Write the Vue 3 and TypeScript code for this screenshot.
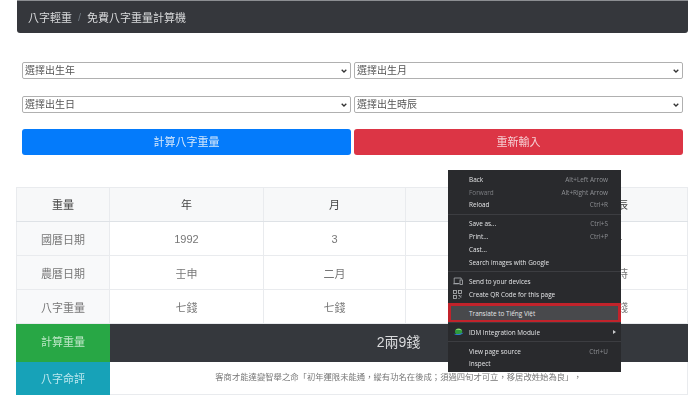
<script setup lang="ts">
interface MenuItem { label: string; key?: string; dim?: boolean; icon?: string; arrow?: boolean; hot?: boolean; sep?: boolean }
const selects: string[] = ['選擇出生年', '選擇出生月', '選擇出生日', '選擇出生時辰']
const rows: string[][] = [
  ['國曆日期', '1992', '3', '', '子'],
  ['農曆日期', '壬申', '二月', '', '子時'],
  ['八字重量', '七錢', '七錢', '', '七錢'],
]
const menu: MenuItem[] = [
  { label: 'Back', key: 'Alt+Left Arrow' },
  { label: 'Forward', key: 'Alt+Right Arrow', dim: true },
  { label: 'Reload', key: 'Ctrl+R', sep: true },
  { label: 'Save as...', key: 'Ctrl+S' },
  { label: 'Print...', key: 'Ctrl+P' },
  { label: 'Cast...' },
  { label: 'Search images with Google', sep: true },
  { label: 'Send to your devices', icon: 'send' },
  { label: 'Create QR Code for this page', icon: 'qr', sep: true },
  { label: 'Translate to Tiếng Việt', hot: true, sep: true },
  { label: 'IDM Integration Module', icon: 'idm', arrow: true, sep: true },
  { label: 'View page source', key: 'Ctrl+U' },
  { label: 'Inspect' },
]
</script>

<template>
  <div class="page" lang="zh-Hant">
    <nav class="crumb">
      <span>八字輕重</span><span class="slash">/</span><span>免費八字重量計算機</span>
    </nav>

    <form class="form" @submit.prevent>
      <select v-for="s in selects" :key="s" class="sel">
        <option>{{ s }}</option>
      </select>
      <button type="button" class="btn blue">計算八字重量</button>
      <button type="button" class="btn red">重新輸入</button>
    </form>

    <table class="tbl">
      <colgroup>
        <col class="c0" /><col class="c1" /><col class="c2" /><col class="c3" /><col />
      </colgroup>
      <thead>
        <tr><th>重量</th><th>年</th><th>月</th><th>日</th><th>時辰</th></tr>
      </thead>
      <tbody>
        <tr v-for="r in rows" :key="r[0]">
          <th class="side">{{ r[0] }}</th>
          <td v-for="(c, i) in r.slice(1)" :key="i">{{ c }}</td>
        </tr>
        <tr class="total">
          <th class="green">計算重量</th>
          <td colspan="4" class="dark">2兩9錢</td>
        </tr>
        <tr class="note">
          <th class="cyan">八字命評</th>
          <td colspan="4" class="verse">客商才能達變智舉之命「初年運限未能通，縱有功名在後成；須過四旬才可立，移居改姓始為良」，</td>
        </tr>
      </tbody>
    </table>

    <ul class="menu" lang="en">
      <li v-for="m in menu" :key="m.label" class="item" :class="{ dim: m.dim, sep: m.sep, hot: m.hot }">
        <span class="ico">
          <svg v-if="m.icon === 'send'" width="10" height="8" viewBox="0 0 10 8" fill="none" stroke="#aeb1b5" stroke-width="0.8">
            <path d="M6.5 6.5H1.2V1h7v1.5" /><path d="M0.2 6.8h5.5" /><rect x="7" y="3" width="2.5" height="4.5" />
          </svg>
          <svg v-else-if="m.icon === 'qr'" width="9" height="9" viewBox="0 0 9 9" fill="none" stroke="#b5b7ba" stroke-width="0.8">
            <rect x="0.5" y="0.5" width="3" height="3" /><rect x="5.5" y="0.5" width="3" height="3" /><rect x="0.5" y="5.5" width="3" height="3" />
            <path d="M5.5 5.5h1.5v1.5h1.5M5.5 8.5h1M8.5 5.5v.5" />
          </svg>
          <svg v-else-if="m.icon === 'idm'" width="11" height="9" viewBox="0 0 11 9">
            <ellipse cx="5.6" cy="3.6" rx="3.6" ry="3.2" fill="#2f9a3c" />
            <path d="M2.6 2.2C4.2.4 7.2.4 8.8 2.4 6.8 1.6 4.6 1.6 2.6 2.2Z" fill="#a6dc80" />
            <path d="M0.4 5.4C3 7.8 8 7.8 10.6 4.4 8 5.8 3.6 6.4 0.4 5.4Z" fill="#2f7ad0" />
          </svg>
        </span>
        <span class="lab">{{ m.label }}</span>
        <span v-if="m.key" class="key">{{ m.key }}</span>
        <span v-if="m.arrow" class="arr"></span>
      </li>
    </ul>
  </div>
</template>

<style>
html, body { margin: 0; background: #fff; }
</style>

<style scoped>
.page {
  position: relative;
  width: 696px;
  height: 403px;
  box-sizing: border-box;
  padding: 0 8px 0 17px;
  overflow: hidden;
  font-family: "Liberation Sans", "Noto Sans CJK TC", sans-serif;
  color: #495057;
  filter: blur(0.3px);
}
.crumb {
  height: 33px;
  box-sizing: border-box;
  display: flex;
  align-items: center;
  padding: 0 11px;
  background: #35373c;
  border-radius: 0 0 3px 3px;
  border-top: 1px solid #8c8e92;
  color: #d9dadc;
  font-size: 11px;
}
.slash { margin: 0 6px; color: #6c757d; }
.form {
  display: grid;
  grid-template-columns: 1fr 1fr;
  column-gap: 3px;
  row-gap: 17px;
  padding: 0 5px;
  margin-top: 29px;
}
.sel {
  height: 17px;
  min-width: 0;
  padding: 0 0 0 2px;
  appearance: none;
  font: 10px "Liberation Sans", "Noto Sans CJK TC", sans-serif;
  color: #555;
  background: #fff url("data:image/svg+xml,%3Csvg xmlns='http://www.w3.org/2000/svg' width='6' height='4'%3E%3Cpath d='M.7.7 3 3l2.3-2.3' fill='none' stroke='%23333' stroke-width='1.3'/%3E%3C/svg%3E") no-repeat right 3px center;
  border: 1px solid #b0b0b0;
  border-radius: 2px;
}
.btn {
  height: 26px;
  margin-top: -1px;
  padding: 0 0 2px;
  border: 0;
  border-radius: 3px;
  color: #d6e8fb;
  font: 11px "Liberation Sans", "Noto Sans CJK TC", sans-serif;
}
.blue { background: #047bfb; }
.red { background: #dc3545; color: #f5cfd3; }
.tbl {
  width: 672px;
  margin: 32px 0 0 -1px;
  border-collapse: collapse;
  table-layout: fixed;
  font-size: 11px;
}
.c0 { width: 93px; }
.c1 { width: 154px; }
.c2 { width: 142px; }
.c3 { width: 141px; }
.tbl th, .tbl td {
  padding: 0;
  height: 34px;
  border: 1px solid #e9ebee;
  text-align: center;
  font-weight: 400;
  box-sizing: border-box;
}
.tbl thead th {
  padding-bottom: 2px;
  background: #f7f8f9;
  color: #444;
  border-bottom: 1px solid #dee2e6;
}
.tbl .side { background: #f8f9fa; color: #777; }
.tbl td { color: #777; }
.tbl .total th, .tbl .total td { height: 38px; padding-bottom: 3px; }
.tbl .note th, .tbl .note td { height: 33px; }
.tbl .green { background: #28a745; color: #bfe8c8; border-color: #28a745; }
.tbl .dark {
  background: #35383d;
  color: #d9dadc;
  font-size: 14px;
  border-color: #35383d;
}
.tbl .cyan { background: #17a2b8; color: #bde8ef; border-color: #17a2b8; }
.tbl .note .verse { font-size: 8.34px; color: #777; padding-bottom: 5px; }
.menu {
  position: absolute;
  left: 448px;
  top: 170px;
  width: 173px;
  height: 202px;
  box-sizing: border-box;
  margin: 0;
  padding: 3px 0 0;
  list-style: none;
  background: #292a2d;
  font-family: "Open Sans", sans-serif;
  font-size: 6.4px;
  color: #e3e4e6;
}
.item {
  position: relative;
  display: flex;
  align-items: center;
  height: 12.8px;
  padding: 0 13px 0 5px;
}
.item.sep { margin-bottom: 6.2px; }
.item.sep::after {
  content: "";
  position: absolute;
  left: 0;
  right: 0;
  bottom: -3.6px;
  height: 1px;
  background: #3c3d41;
}
.ico {
  width: 16px;
  display: flex;
  align-items: center;
  flex: none;
}
.lab { flex: 1; white-space: nowrap; }
.key { color: #8e9094; }
.dim .lab { color: #7d7f83; }
.hot::before {
  content: "";
  position: absolute;
  left: 0;
  right: 0;
  top: -3.5px;
  bottom: -3.5px;
  box-sizing: border-box;
  background: #48494c;
  border: 3px solid #c1232b;
}
.hot .lab, .hot .ico { position: relative; }
.arr {
  position: absolute;
  right: 5px;
  top: 4.5px;
  border-left: 3px solid #c9cacc;
  border-top: 2px solid transparent;
  border-bottom: 2px solid transparent;
}
</style>
